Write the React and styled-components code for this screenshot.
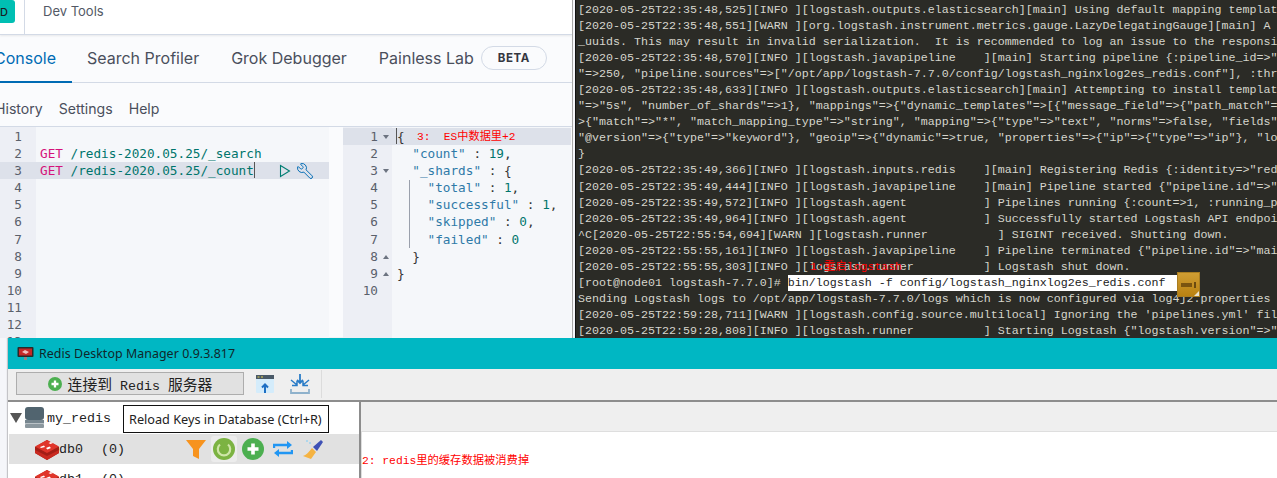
import React from "react";
import styled, { createGlobalStyle } from "styled-components";
import { Wrench } from "lucide-react";

const Global = createGlobalStyle`
  html, body { margin: 0; padding: 0; background: #f5f6fa; overflow: hidden; }
  #root { width: 1277px; height: 478px; overflow: hidden; }
`;

const Page = styled.div`
  width: 1277px; height: 478px; display: flex; flex-direction: column; overflow: hidden;
  font-family: Inter, "Noto Sans", sans-serif;
`;
const Top = styled.div`display: flex; height: 338px; flex: none; overflow: hidden;`;
const Kibana = styled.section`
  width: 572px; flex: none; display: flex; flex-direction: column; background: #fafbfd;
  border-right: 1px solid #a8a8a8; overflow: hidden;
`;
const Header = styled.header`
  height: 35px; flex: none; display: flex; background: #fff; border-bottom: 1px solid #d3dae6;
  box-sizing: border-box; box-shadow: 0 1px 2px rgba(0,0,0,.08); align-items: flex-start; position: relative;
`;
const Avatar = styled.div`
  width: 15px; height: 23px; background: #00bfb3; border-radius: 0 3px 3px 0; box-sizing: border-box; margin-right: -2px;
  font-size: 11px; font-weight: 500; color: #1a1c21; display: flex; align-items: center; overflow: hidden;
`;
const HeaderSep = styled.div`width: 1px; height: 35px; background: #d3dae6; margin-left: 11px;`;
const Crumb = styled.div`margin: 3px 0 0 18px; font-size: 13px; line-height: 17px; color: #535966;`;
const Tabs = styled.nav`
  height: 47px; flex: none; display: flex; align-items: stretch; border-bottom: 1px solid #d3dae6;
  margin-left: -15px;
`;
const Tab = styled.div`
  font-size: 16px; line-height: 20px; padding: 13px 0 0; margin-right: ${p => p.$gap}px;
  color: ${p => (p.$active ? "#006bb4" : "#4a4f5c")};
  border-bottom: 2px solid ${p => (p.$active ? "#006bb4" : "transparent")};
  box-sizing: border-box; height: 48px; padding-left: ${p => (p.$active ? "9px" : "0")};
  padding-right: ${p => (p.$active ? "16px" : "0")};
`;
const Beta = styled.span`
  height: 24px; width: 66px; margin: 11px 0 0 7px; border: 1px solid #d3dae6; border-radius: 13px; box-sizing: border-box;
  font-size: 11.5px; font-weight: 700; letter-spacing: .6px; color: #343741; display: flex; align-items: center; justify-content: center;
`;
const Actions = styled.div`
  height: 44px; flex: none; display: flex; gap: 16px; align-items: center; font-size: 14.1px; color: #4a4f5c; margin-left: -5px;
  border-bottom: 1px solid #d3dae6; padding-top: 7px; box-sizing: border-box;
`;
const Panes = styled.div`flex: 1; display: flex; min-height: 0; overflow: hidden;
  font-family: "DejaVu Sans Mono", monospace; font-size: 12.7px; line-height: 17.1px;`;
const Pane = styled.div`width: ${p => p.$w}px; flex: none; display: flex; background: #f5f7fa; position: relative; overflow: hidden;`;
const Divider = styled.div`width: 14px; flex: none; background: #fafbfd;`;
const Gutter = styled.div`width: ${p => p.$w}px; flex: none; background: #edeff5; padding-top: 1px;`;
const GutterLine = styled.div`
  height: 17.1px; color: #5a606b; text-align: right; padding-right: ${p => p.$pad}px; box-sizing: border-box; position: relative;
  background: ${p => (p.$active ? "#dde1ea" : "transparent")};
`;
const Fold = styled.span`
  position: absolute; right: 3px; top: 7px; width: 0; height: 0; border-left: 3px solid transparent; border-right: 3px solid transparent;
  ${p => (p.$up ? "border-bottom: 4px solid #6c7380;" : "border-top: 4px solid #6c7380;")}
`;
const Code = styled.div`flex: 1; min-width: 0; padding-top: 1px;`;
const CodeLine = styled.div`
  height: 17.1px; white-space: pre; padding-left: ${p => p.$pad}px; position: relative;
  background: ${p => (p.$active ? "#dde1ea" : "transparent")};
`;
const Method = styled.span`color: #d5127a;`;
const Url = styled.span`color: #00756c;`;
const Key = styled.span`color: #2f7aa8;`;
const Num = styled.span`color: #00756c;`;
const Plain = styled.span`color: #333;`;
const Caret = styled.span`display: inline-block; width: 1px; height: 16px; background: #555; vertical-align: -3px;`;
const LineTools = styled.span`position: absolute; left: 243px; top: 0; display: flex; gap: 5px; align-items: center; height: 18px;`;
const WrenchIcon = styled(Wrench)`transform: scaleX(-1);`;
const IndentGuide = styled.div`position: absolute; left: 66px; top: 53px; width: 1px; height: 68px; background: #9aa0ac;`;
const Note = styled.span`
  position: absolute; font-family: "Liberation Mono", "Noto Sans CJK SC", monospace; color: #f00; white-space: pre;
  font-size: ${p => p.$size || 11}px; line-height: 14px; left: ${p => p.$x}px; top: ${p => p.$y}px;
`;

const Terminal = styled.section`
  flex: 1; background: #2b2b26; color: #d6d6cd; font-family: "Liberation Mono", monospace; font-size: 11.67px;
  line-height: 16.05px; padding: 2px 0 0 3px; margin-left: 2px; white-space: pre; overflow: hidden; position: relative; box-shadow: inset 1px 0 0 #111;
`;
const Selected = styled.span`background: #fff; color: #222; display: inline-block; width: 390px;`;
const Ime = styled.div`
  position: absolute; left: 602px; top: 272px; width: 23px; height: 25px; background: linear-gradient(#cf9d33, #b98212);
  border: 1px solid #a97d20; box-sizing: border-box; display: flex; align-items: center; justify-content: center; gap: 2px;
`;
const ImeBar = styled.span`width: 11px; height: 4px; background: #7a5410;`;
const ImeI = styled.span`width: 2px; height: 6px; background: #6a4a10;`;
const ImeCorner = styled.span`
  position: absolute; right: 0; bottom: 0; width: 0; height: 0; border-left: 5px solid transparent; border-bottom: 5px solid #e8e2d0;
`;

const Win = styled.section`
  flex: 1; margin-left: 8px; background: #fff; display: flex; flex-direction: column; min-height: 0; box-shadow: -1px 0 1px rgba(0,0,0,.2);
`;
const Title = styled.div`
  height: 31px; flex: none; background: #00b7c3; display: flex; align-items: center; padding-left: 9px; gap: 5px;
  font-family: "Noto Sans", sans-serif; font-size: 12.4px; color: #10262a; letter-spacing: .06px;
`;
const Toolbar = styled.div`
  height: 33px; flex: none; background: #efefef; border-bottom: 2px solid #8d8d8d; box-sizing: border-box; display: flex; align-items: center; padding: 0 0 2px 8px;
`;
const ConnectBtn = styled.div`
  width: 228px; height: 23px; box-sizing: border-box; background: #e1e1e1; border: 1px solid #adadad; display: flex; align-items: center; justify-content: center; gap: 6px;
  font-family: "Liberation Mono", monospace; font-size: 13.33px; color: #222; white-space: pre;
`;
const Cjk = styled.span`font-family: "Noto Sans CJK SC", sans-serif; font-size: 14.8px;`;
const ToolIcon = styled.div`width: 22px; height: 24px; margin-left: ${p => p.$ml}px; display: flex; align-items: center; justify-content: center;`;
const ToolSep = styled.div`width: 1px; height: 28px; background: #dcdcdc; margin-left: 10px;`;
const Body = styled.div`flex: 1; display: flex; min-height: 0; overflow: hidden;`;
const Tree = styled.div`
  width: 350px; flex: none; margin-left: 1px; border-right: 2px solid #8d8d8d; background: #fff; position: relative; overflow: hidden;
  font-family: "Liberation Mono", monospace; font-size: 13.33px; color: #222;
`;
const Row = styled.div`
  height: ${p => p.$h}px; display: flex; align-items: center; position: relative; padding-left: ${p => p.$pad}px;
  background: ${p => (p.$active ? "#e1e1e1" : "transparent")};
`;
const Triangle = styled.span`
  width: 0; height: 0; border-left: 6px solid transparent; border-right: 6px solid transparent; border-top: 10px solid #555; margin-right: 3px;
`;
const DbName = styled.span`margin-left: ${p => p.$ml || 0}px; width: 42px; white-space: pre;`;
const RowTools = styled.div`position: absolute; left: 176px; top: 0; height: 30px; display: flex; align-items: center;`;
const ToolSlot = styled.span`
  width: ${p => p.$w}px; height: 26px; margin-left: ${p => p.$ml || 0}px; display: flex; align-items: center; justify-content: center; border-radius: 3px;
  background: ${p => (p.$hover ? "#ececec" : "transparent")};
`;
const Tooltip = styled.div`
  position: absolute; left: 114px; top: 3px; width: 206px; height: 28px; box-sizing: border-box; background: #fff; border: 1px solid #111;
  font-family: "Noto Sans", sans-serif; font-size: 12.7px; color: #222; display: flex; align-items: center; padding-left: 5px; white-space: pre; z-index: 2;
`;
const Content = styled.div`flex: 1; display: flex; flex-direction: column; background: #efefef;`;
const ContentTabs = styled.div`height: 29px; flex: none;`;
const ContentBody = styled.div`
  flex: 1; background: #fff; border-top: 1px solid #dedede; border-left: 1px solid #dedede; padding: 21px 0 0 0;
  font-family: "Liberation Mono", "Noto Sans CJK SC", monospace; font-size: 11.3px; line-height: 16px; color: #f00; white-space: pre;
`;

const logLines = [
  `[2020-05-25T22:35:48,525][INFO ][logstash.outputs.elasticsearch][main] Using default mapping templat`,
  `[2020-05-25T22:35:48,551][WARN ][org.logstash.instrument.metrics.gauge.LazyDelegatingGauge][main] A `,
  `_uuids. This may result in invalid serialization.  It is recommended to log an issue to the responsi`,
  `[2020-05-25T22:35:48,570][INFO ][logstash.javapipeline    ][main] Starting pipeline {:pipeline_id=>"`,
  `"=>250, "pipeline.sources"=>["/opt/app/logstash-7.7.0/config/logstash_nginxlog2es_redis.conf"], :thr`,
  `[2020-05-25T22:35:48,633][INFO ][logstash.outputs.elasticsearch][main] Attempting to install templat`,
  `"=>"5s", "number_of_shards"=>1}, "mappings"=>{"dynamic_templates"=>[{"message_field"=>{"path_match"=`,
  `>{"match"=>"*", "match_mapping_type"=>"string", "mapping"=>{"type"=>"text", "norms"=>false, "fields"`,
  `"@version"=>{"type"=>"keyword"}, "geoip"=>{"dynamic"=>true, "properties"=>{"ip"=>{"type"=>"ip"}, "lo`,
  `}`,
  `[2020-05-25T22:35:49,366][INFO ][logstash.inputs.redis    ][main] Registering Redis {:identity=>"red`,
  `[2020-05-25T22:35:49,444][INFO ][logstash.javapipeline    ][main] Pipeline started {"pipeline.id"=>"`,
  `[2020-05-25T22:35:49,572][INFO ][logstash.agent           ] Pipelines running {:count=>1, :running_p`,
  `[2020-05-25T22:35:49,964][INFO ][logstash.agent           ] Successfully started Logstash API endpoi`,
  `^C[2020-05-25T22:55:54,694][WARN ][logstash.runner          ] SIGINT received. Shutting down.`,
  `[2020-05-25T22:55:55,161][INFO ][logstash.javapipeline    ] Pipeline terminated {"pipeline.id"=>"mai`,
  `[2020-05-25T22:55:55,303][INFO ][logstash.runner          ] Logstash shut down.`,
];
const logTail = [
  `Sending Logstash logs to /opt/app/logstash-7.7.0/logs which is now configured via log4j2.properties`,
  `[2020-05-25T22:59:28,711][WARN ][logstash.config.source.multilocal] Ignoring the 'pipelines.yml' fil`,
  `[2020-05-25T22:59:28,808][INFO ][logstash.runner          ] Starting Logstash {"logstash.version"=>"`,
];

const PlusCircle = ({ size = 22, fill = "#4caf50" }) => (
  <svg width={size} height={size} viewBox="0 0 22 22">
    <circle cx="11" cy="11" r="11" fill={fill} />
    <path d="M11 5.500v11M5.500 11h11" stroke="#fff" strokeWidth="3.600" />
  </svg>
);
const RedisCube = () => (
  <svg width="24" height="21" viewBox="0 0 24 21">
    <path d="M0 8 12 1l12 7v6l-12 7-12-7z" fill="#a41e16" />
    <path d="M0 11l12 6 12-6v3l-12 7-12-7z" fill="#c92a20" />
    <path d="M0 7.500 12 1l12 6.500-12 6.500z" fill="#e0352a" />
    <path d="M5 8l4-1.500 1 1.500-4 1zM13.500 4l2.500-1 2 1-2.500 1zM11 9l3.500-1.500 1.500 1.500-3.500 1.500z" fill="#fff" />
  </svg>
);

const rightLines = [1, 2, 3, 4, 5, 6, 7, 8, 9, 10];
const leftLines = Array.from({ length: 13 }, (_, i) => i + 1);

export default function App() {
  return (
    <Page>
      <Global />
      <Top>
        <Kibana>
          <Header>
            <Avatar>D</Avatar>
            <HeaderSep />
            <Crumb>Dev Tools</Crumb>
          </Header>
          <Tabs>
            <Tab $active $gap={15}>Console</Tab>
            <Tab $gap={32}>Search Profiler</Tab>
            <Tab $gap={32}>Grok Debugger</Tab>
            <Tab $gap={0}>Painless Lab</Tab>
            <Beta>BETA</Beta>
          </Tabs>
          <Actions>
            <span>History</span><span>Settings</span><span>Help</span>
          </Actions>
          <Panes>
            <Pane $w={329}>
              <Gutter $w={36}>
                {leftLines.map(n => <GutterLine key={n} $pad={14} $active={n === 3}>{n}</GutterLine>)}
              </Gutter>
              <Code>
                <CodeLine $pad={4} />
                <CodeLine $pad={4}><Method>GET</Method> <Url>/redis-2020.05.25/_search</Url></CodeLine>
                <CodeLine $pad={4} $active>
                  <Method>GET</Method> <Url>/redis-2020.05.25/_count</Url><Caret />
                  <LineTools>
                    <svg width="12" height="14" viewBox="0 0 12 14"><path d="M1.500 1.500v11l9-5.500z" fill="none" stroke="#017d73" strokeWidth="1.100" /></svg>
                    <WrenchIcon size={18} color="#006bb4" strokeWidth={1.3} />
                  </LineTools>
                </CodeLine>
              </Code>
            </Pane>
            <Divider />
            <Pane $w={228}>
              <Gutter $w={49}>
                {rightLines.map(n => (
                  <GutterLine key={n} $pad={14} $active={n === 1}>
                    {n}
                    {[1, 3].includes(n) && <Fold />}
                    {[8, 9].includes(n) && <Fold $up />}
                  </GutterLine>
                ))}
              </Gutter>
              <Code>
                <CodeLine $pad={4} $active><Caret /><Plain>{"{"}</Plain></CodeLine>
                <CodeLine $pad={5}><Key>{`  "count"`}</Key><Plain> : </Plain><Num>19</Num><Plain>,</Plain></CodeLine>
                <CodeLine $pad={5}><Key>{`  "_shards"`}</Key><Plain>{" : {"}</Plain></CodeLine>
                <CodeLine $pad={5}><Key>{`    "total"`}</Key><Plain> : </Plain><Num>1</Num><Plain>,</Plain></CodeLine>
                <CodeLine $pad={5}><Key>{`    "successful"`}</Key><Plain> : </Plain><Num>1</Num><Plain>,</Plain></CodeLine>
                <CodeLine $pad={5}><Key>{`    "skipped"`}</Key><Plain> : </Plain><Num>0</Num><Plain>,</Plain></CodeLine>
                <CodeLine $pad={5}><Key>{`    "failed"`}</Key><Plain> : </Plain><Num>0</Num></CodeLine>
                <CodeLine $pad={5}><Plain>{"  }"}</Plain></CodeLine>
                <CodeLine $pad={5}><Plain>{"}"}</Plain></CodeLine>
              </Code>
              <IndentGuide />
              <Note $x={74} $y={3} $size={11.2}>{"3:  ES中数据里+2"}</Note>
            </Pane>
          </Panes>
        </Kibana>
        <Terminal>
          {logLines.join("\n")}
          {"\n[root@node01 logstash-7.7.0]# "}
          <Selected>{"bin/logstash -f config/logstash_nginxlog2es_redis.conf"}</Selected>
          {"\n" + logTail.join("\n")}
          <Note $x={235} $y={260} $size={11.5}>{"1:重启logstash"}</Note>
          <Ime><ImeBar /><ImeI /><ImeCorner /></Ime>
        </Terminal>
      </Top>
      <Win>
        <Title>
          <svg width="17" height="16" viewBox="0 0 17 16">
            <rect x="0.500" y="1" width="16" height="10" rx="1" fill="#2a2a2a" />
            <rect x="2" y="2.500" width="13" height="7" fill="#c62828" />
            <path d="M5 6l3-2 4 2-3 2z" fill="#fff" opacity=".7" />
            <rect x="7" y="11" width="3" height="3" fill="#888" />
          </svg>
          Redis Desktop Manager 0.9.3.817
        </Title>
        <Toolbar>
          <ConnectBtn>
            <PlusCircle size={14} />
            <span><Cjk>连接到</Cjk>{" Redis "}<Cjk>服务器</Cjk></span>
          </ConnectBtn>
          <ToolIcon $ml={10}>
            <svg width="18" height="18" viewBox="0 0 18 18">
              <rect x="0" y="0" width="18" height="18" rx="1" fill="#d4ecfb" />
              <rect x="0" y="0" width="18" height="4" fill="#4a5a68" />
              <path d="M1.500 2h2M5 2h2" stroke="#e7d24d" strokeWidth="1" />
              <path d="M9 18v-8M6 12.500l3-3 3 3" fill="none" stroke="#1d6fc4" strokeWidth="2" />
            </svg>
          </ToolIcon>
          <ToolIcon $ml={13}>
            <svg width="22" height="22" viewBox="0 0 22 22" fill="none" stroke="#2a7cc7" strokeWidth="1.800">
              <path d="M11 1v9M8 7l3 3 3-3" />
              <path d="M2 7l6 5M3 12.500h5V8M20 7l-6 5M19 12.500h-5V8" strokeWidth="1.500" />
              <path d="M2 16v4h18v-4" stroke="#8fb2cc" />
            </svg>
          </ToolIcon>
          <ToolSep />
        </Toolbar>
        <Body>
          <Tree>
            <Row $h={32} $pad={1}>
              <Triangle />
              <svg width="19" height="22" viewBox="0 0 19 22">
                <rect x="0" y="0" width="19" height="13" rx="3" fill="#51646f" />
                <rect x="0" y="13" width="19" height="3.500" fill="#77868f" />
                <rect x="0" y="17" width="19" height="4" rx="1" fill="#8b979e" />
              </svg>
              <DbName $ml={3}>my_redis</DbName>
              <Tooltip>Reload Keys in Database (Ctrl+R)</Tooltip>
            </Row>
            <Row $h={30} $pad={26} $active>
              <RedisCube />
              <DbName>db0</DbName>
              <span>(0)</span>
              <RowTools>
                <ToolSlot $w={22}>
                  <svg width="20" height="21" viewBox="0 0 20 21"><path d="M0 1h20l-7 9v10l-6-3v-7z" fill="#f7931e" /></svg>
                </ToolSlot>
                <ToolSlot $w={26} $hover $ml={4}>
                  <svg width="22" height="22" viewBox="0 0 22 22">
                    <circle cx="11" cy="11" r="11" fill="#7cb342" />
                    <path d="M7 6.500a6.200 6.200 0 1 0 8 0" fill="none" stroke="#cfe6a8" strokeWidth="2.200" />
                  </svg>
                </ToolSlot>
                <ToolSlot $w={22} $ml={5}><PlusCircle /></ToolSlot>
                <ToolSlot $w={20} $ml={9}>
                  <svg width="20" height="18" viewBox="0 0 20 18" fill="none" stroke="#2196f3" strokeWidth="2.400">
                    <path d="M1 8V5h15" /><path d="M14 1l5 4-5 4z" fill="#2196f3" stroke="none" />
                    <path d="M19 10v3H4" /><path d="M6 9l-5 4 5 4z" fill="#2196f3" stroke="none" />
                  </svg>
                </ToolSlot>
                <ToolSlot $w={21} $ml={10}>
                  <svg width="21" height="21" viewBox="0 0 21 21">
                    <path d="M9 9l4 4-5 7-8-3c3-1 6-4 9-8z" fill="#f5b342" />
                    <path d="M10 8l8-7 2 2-6 9z" fill="#3f51b5" />
                    <circle cx="4" cy="2" r="1" fill="#9bd3f0" /><circle cx="7" cy="4" r="1" fill="#9bd3f0" />
                  </svg>
                </ToolSlot>
              </RowTools>
            </Row>
            <Row $h={30} $pad={26}>
              <RedisCube />
              <DbName>db1</DbName>
              <span>(0)</span>
            </Row>
          </Tree>
          <Content>
            <ContentTabs />
            <ContentBody>{"2: redis里的缓存数据被消费掉"}</ContentBody>
          </Content>
        </Body>
      </Win>
    </Page>
  );
}
